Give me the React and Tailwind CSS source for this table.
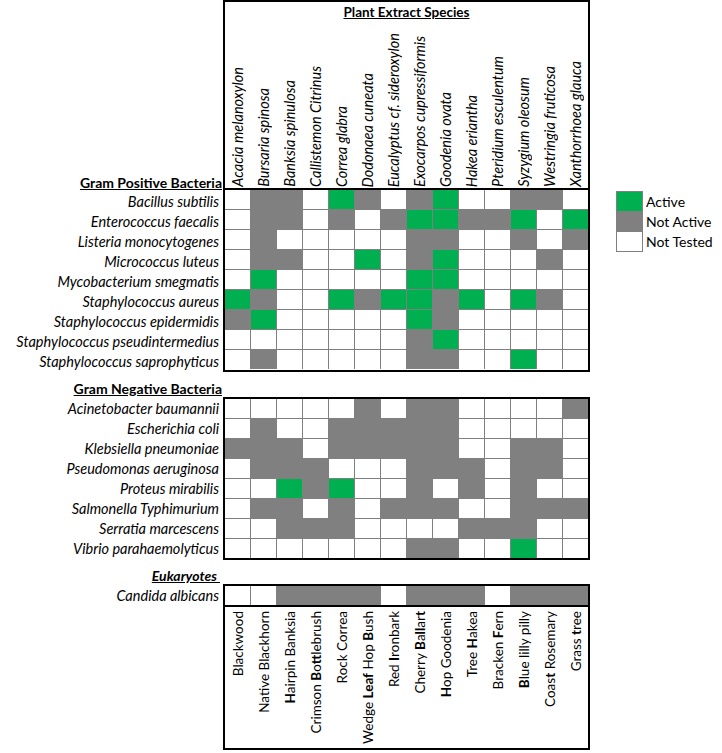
import React from "react";

const species = [
  "Acacia melanoxylon",
  "Bursaria spinosa",
  "Banksia spinulosa",
  "Callistemon Citrinus",
  "Correa glabra",
  "Dodonaea cuneata",
  "Eucalyptus cf. sideroxylon",
  "Exocarpos cupressiformis",
  "Goodenia ovata",
  "Hakea eriantha",
  "Pteridium esculentum",
  "Syzygium oleosum",
  "Westringia fruticosa",
  "Xanthorrhoea glauca",
];

const gramPos = [
  ["Bacillus subtilis", "WGGWAGWGAWWGGW"],
  ["Enterococcus faecalis", "WGGWGWGAAGGAWA"],
  ["Listeria monocytogenes", "WGWWWWWGGWWGWG"],
  ["Micrococcus luteus", "WGGWWAWGAWWWGW"],
  ["Mycobacterium smegmatis", "WAWWWWWAAWWWWW"],
  ["Staphylococcus aureus", "AGWWAGAAGAWAGW"],
  ["Staphylococcus epidermidis", "GAWWWWWAGWWWWW"],
  ["Staphylococcus pseudintermedius", "WWWWWWWGAWWWWW"],
  ["Staphylococcus saprophyticus", "WGWWWWWGGWWAWW"],
];

const gramNeg = [
  ["Acinetobacter baumannii", "WWWWWGWGGWWWWG"],
  ["Escherichia coli", "WGWWGGGGGWWWWW"],
  ["Klebsiella pneumoniae", "GGGWGGGGGWWGGW"],
  ["Pseudomonas aeruginosa", "WGGGWWWGGGWGGW"],
  ["Proteus mirabilis", "WWAGAWWGWGWGWW"],
  ["Salmonella Typhimurium", "WGGWGWGGGWWGGG"],
  ["Serratia marcescens", "WWGGGWWWWGGGWW"],
  ["Vibrio parahaemolyticus", "WWWWWWWGGWWAWW"],
];

const euk = [["Candida albicans", "WWGGGGWGGGWGGG"]];

const common = [
  <>Blackwood</>,
  <>Native Blackhorn</>,
  <><b>H</b>airpin Banksia</>,
  <>Crimson <b>B</b>o<b>tt</b>lebrush</>,
  <>Rock Correa</>,
  <>Wedge <b>Leaf</b> Hop <b>B</b>ush</>,
  <>Red <b>I</b>ronbark</>,
  <>Cherry <b>B</b>a<b>ll</b>ar<b>t</b></>,
  <><b>H</b>op Goodenia</>,
  <>Tree <b>H</b>akea</>,
  <>Bracken <b>F</b>ern</>,
  <><b>B</b>lue lilly pilly</>,
  <>Coas<b>t</b> Rosemary</>,
  <>Grass <b>t</b>ree</>,
];

function Cell({ v }) {
  return (
    <div
      className={
        v === "A"
          ? "h-[19px] bg-[#00b050]"
          : v === "G"
          ? "h-[19px] bg-[#808080]"
          : "h-[19px] bg-white"
      }
    />
  );
}

function Grid({ rows }) {
  return (
    <div className="grid grid-cols-[repeat(14,25px)] gap-px bg-[#808080]">
      {rows.map(([name, data]) =>
        data.split("").map((v, i) => <Cell key={name + i} v={v} />)
      )}
    </div>
  );
}

function RowLabels({ rows }) {
  return rows.map(([name]) => (
    <div key={name} className="h-[20px] leading-[20px] text-right pr-[4px] italic whitespace-nowrap text-[14.5px]">
      {name}
    </div>
  ));
}

function Legend() {
  return (
    <div className="ml-[26px] mt-[191px] flex">
      <div className="flex flex-col gap-px border border-[#808080] bg-[#808080] self-start">
        <div className="w-[25px] h-[19px] bg-[#00b050]" />
        <div className="w-[25px] h-[19px] bg-[#808080]" />
        <div className="w-[25px] h-[19px] bg-white" />
      </div>
      <div className="flex flex-col pl-[3px] pt-[1px] text-[14px]">
        <div className="h-[20px] leading-[20px]">Active</div>
        <div className="h-[20px] leading-[20px]">Not Active</div>
        <div className="h-[20px] leading-[20px]">Not Tested</div>
      </div>
    </div>
  );
}

export default function App() {
  return (
    <div className="w-[722px] h-[753px] bg-white overflow-hidden text-black text-[13.5px] [font-family:Lato,sans-serif]">
      {/* Section 1 */}
      <div className="flex">
        <div className="w-[223px] flex flex-col">
          <div className="h-[192px] flex items-end justify-end pr-[1px] pb-[1px]">
            <span className="font-bold underline leading-[16px] text-[14px]">Gram Positive Bacteria</span>
          </div>
          <RowLabels rows={gramPos} />
        </div>
        <div className="border-2 border-black">
          <div className="h-[188px] border-b-2 border-black flex flex-col">
            <div className="text-center font-bold underline leading-[16px] pt-[2px]">
              Plant Extract Species
            </div>
            <div className="flex-1 grid grid-cols-[repeat(14,25px)] gap-x-px items-end">
              {species.map((s) => (
                <div key={s} className="flex justify-center pb-[1px]">
                  <span className="[writing-mode:vertical-rl] rotate-180 italic leading-[20px] whitespace-nowrap text-[14.5px]">
                    {s}
                  </span>
                </div>
              ))}
            </div>
          </div>
          <Grid rows={gramPos} />
        </div>
        <Legend />
      </div>

      {/* Section 2 */}
      <div className="flex">
        <div className="w-[223px] flex flex-col">
          <div className="h-[27px] flex items-end justify-end pr-[1px] pb-[2px]">
            <span className="font-bold underline leading-[16px] text-[14px]">Gram Negative Bacteria</span>
          </div>
          <RowLabels rows={gramNeg} />
        </div>
        <div className="mt-[25px] self-start border-2 border-black">
          <Grid rows={gramNeg} />
        </div>
      </div>

      {/* Section 3 */}
      <div className="flex">
        <div className="w-[223px] flex flex-col">
          <div className="h-[26px] flex items-end justify-end pr-[3px] pb-[2px]">
            <span className="font-bold italic underline leading-[16px] whitespace-pre text-[14px]">Eukaryotes </span>
          </div>
          <RowLabels rows={euk} />
        </div>
        <div className="mt-[24px] self-start border-2 border-black">
          <Grid rows={euk} />
          <div className="h-[143px] border-t-2 border-black grid grid-cols-[repeat(14,25px)] gap-x-px items-start pt-[4px]">
            {common.map((c, i) => (
              <div key={i} className="flex justify-center">
                <span className="[writing-mode:vertical-rl] rotate-180 leading-[20px] whitespace-nowrap">
                  {c}
                </span>
              </div>
            ))}
          </div>
        </div>
      </div>
    </div>
  );
}
